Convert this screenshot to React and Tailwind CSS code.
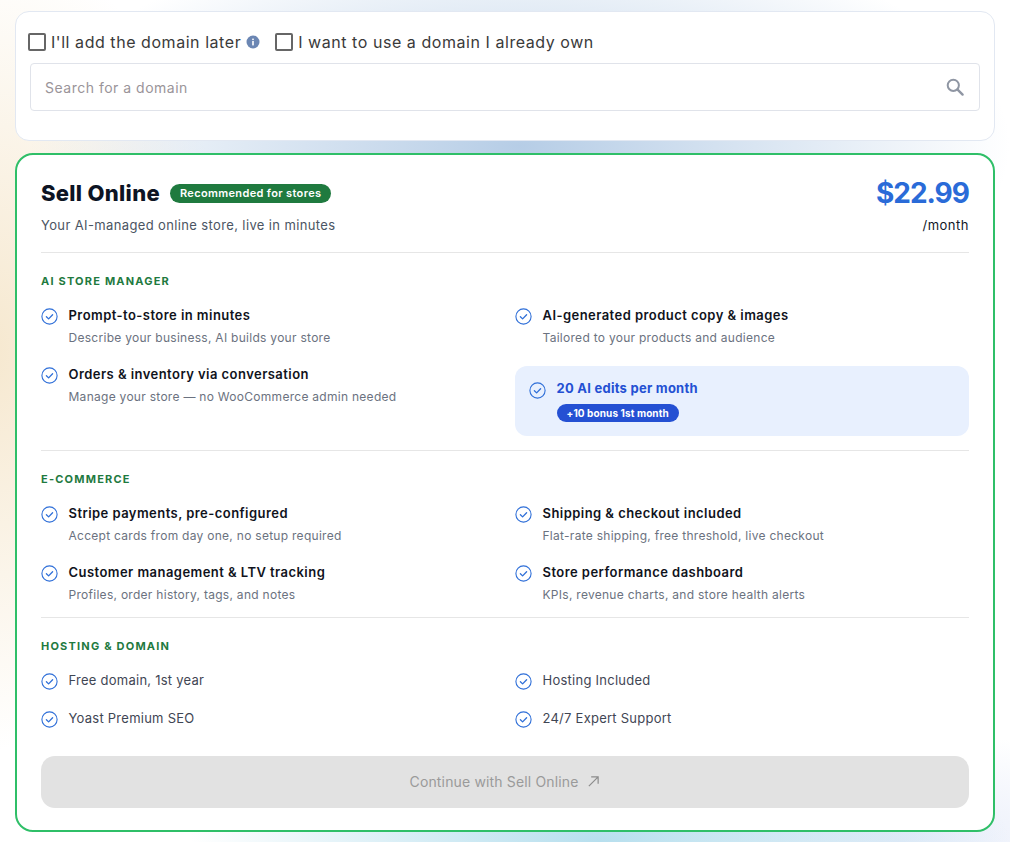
import React from 'react';

const Check = () => (
  <svg className="shrink-0" width="17" height="17" viewBox="0 0 17 17" fill="none">
    <circle cx="8.5" cy="8.5" r="7.6" stroke="#2f6fd8" strokeWidth="1.1" />
    <path d="M5.4 8.8l2.2 2.1 4-4.2" stroke="#2f6fd8" strokeWidth="1.3" strokeLinecap="round" strokeLinejoin="round" />
  </svg>
);

const Feature = ({ title, desc }) => (
  <div className="flex gap-[10.5px]">
    <div className="pt-[3px]"><Check /></div>
    <div>
      <div className="h-[20px] text-[13px] leading-[20px] font-semibold text-[#10131c] tracking-[0.45px]">{title}</div>
      <div className="mt-[3px] h-[20px] text-[12px] leading-[20px] text-[#6b7280] tracking-[0.28px]">{desc}</div>
    </div>
  </div>
);

const Simple = ({ title }) => (
  <div className="flex items-center gap-[10.5px] h-[20px]">
    <Check />
    <span className="text-[13px] text-[#3f4654] tracking-[0.25px]">{title}</span>
  </div>
);

const Heading = ({ children }) => (
  <div className="h-[18px] text-[11px] leading-[18px] font-bold text-[#1f7a3f] tracking-[1.2px] uppercase">{children}</div>
);

const App = () => {
  return (
    <div className="h-[842px] overflow-hidden bg-white bg-[radial-gradient(ellipse_490px_220px_at_520px_146px,#b6cde6_0%,rgba(182,205,230,0)_100%),radial-gradient(ellipse_410px_130px_at_600px_842px,#b7dfee_0%,rgba(183,223,238,0)_100%),radial-gradient(ellipse_300px_110px_at_900px_842px,#e8edfa_0%,rgba(232,237,250,0)_100%),radial-gradient(ellipse_250px_400px_at_-10px_350px,#f6e8cf_0%,rgba(246,232,207,0)_100%)] font-['Inter','Liberation_Sans',sans-serif] pt-[11px] px-[15px]">
      {/* Domain card */}
      <div className="h-[130px] bg-white rounded-[14px] border border-[#e2e8f2] pt-[20px] px-[12px]">
        <div className="flex items-center h-[20px] text-[16px] text-[#3a3a3a] tracking-[0.55px]">
          <label className="flex items-center gap-[5px]">
            <span className="w-[18px] h-[18px] border-2 border-[#666] rounded-[2px] bg-white" />
            I'll add the domain later
          </label>
          <svg className="ml-[5px]" width="14" height="14" viewBox="0 0 14 14">
            <circle cx="7" cy="7" r="6.5" fill="#6b86b3" />
            <rect x="6.2" y="6" width="1.6" height="4.4" fill="#fff" />
            <rect x="6.2" y="3.6" width="1.6" height="1.5" fill="#fff" />
          </svg>
          <label className="flex items-center gap-[5px] ml-[15px]">
            <span className="w-[18px] h-[18px] border-2 border-[#666] rounded-[2px] bg-white" />
            I want to use a domain I already own
          </label>
        </div>
        <div className="relative mt-[11px] ml-[2px] w-[950px]">
          <input
            type="text"
            placeholder="Search for a domain"
            className="w-full h-[48px] rounded-[4px] border border-[#e0e3ea] bg-white pl-[14px] text-[14px] tracking-[0.5px] placeholder:text-[#9a9499] outline-none"
          />
          <svg className="absolute right-[15px] top-[14px]" width="20" height="20" viewBox="0 0 20 20" fill="none">
            <circle cx="8.3" cy="8.3" r="5.6" stroke="#8f96a3" strokeWidth="2" />
            <path d="M12.6 12.6l5 5" stroke="#8f96a3" strokeWidth="2.4" strokeLinecap="round" />
          </svg>
        </div>
      </div>

      {/* Plan card */}
      <div className="mt-[12px] h-[679px] bg-white rounded-[18px] border-2 border-[#2fbf68] px-[24px] pt-[19px]">
        <div className="flex justify-between h-[79px] border-b border-[#e6e6e6]">
          <div>
            <div className="flex items-center gap-[10px] h-[38px]">
              <span className="text-[22px] font-extrabold text-[#0d1424] tracking-[0.3px]">Sell Online</span>
              <span className="h-[19px] px-[10px] rounded-full bg-[#1f7a3f] text-white text-[11px] leading-[19px] font-semibold tracking-[0.35px]">Recommended for stores</span>
            </div>
            <div className="mt-[3px] h-[20px] text-[13px] leading-[20px] text-[#4b5563] tracking-[0.37px]">Your AI-managed online store, live in minutes</div>
          </div>
          <div className="text-right">
            <div className="h-[38px] text-[28px] leading-[38px] font-bold text-[#2a6bd8] tracking-[-1px]">$22.99</div>
            <div className="mt-[3px] h-[20px] text-[13px] leading-[20px] text-[#111827] tracking-[0.5px]">/month</div>
          </div>
        </div>

        <div className="pt-[19px]"><Heading>AI Store Manager</Heading></div>
        <div className="grid grid-cols-2 gap-x-[20px] mt-[15px]">
          <Feature title="Prompt-to-store in minutes" desc="Describe your business, AI builds your store" />
          <Feature title="AI-generated product copy & images" desc="Tailored to your products and audience" />
          <div className="pt-[16px]">
            <Feature title="Orders & inventory via conversation" desc="Manage your store — no WooCommerce admin needed" />
          </div>
          <div className="mt-[18px] h-[70px] rounded-[12px] bg-[#e8f0fe] flex gap-[10.5px] pl-[14px] pt-[12px]">
            <div className="pt-[4px]"><Check /></div>
            <div>
              <div className="h-[20px] text-[13px] leading-[20px] font-bold text-[#2450d3] tracking-[0.25px]">20 AI edits per month</div>
              <div className="mt-[6px] w-fit h-[18px] px-[10px] rounded-full bg-[#2450d3] text-white text-[10px] leading-[18px] font-bold tracking-[0.1px]">+10 bonus 1st month</div>
            </div>
          </div>
        </div>

        <div className="border-t border-[#e6e6e6] mt-[14px] pt-[19px]"><Heading>E-Commerce</Heading></div>
        <div className="grid grid-cols-2 gap-x-[20px] gap-y-[16px] mt-[15px]">
          <Feature title="Stripe payments, pre-configured" desc="Accept cards from day one, no setup required" />
          <Feature title="Shipping & checkout included" desc="Flat-rate shipping, free threshold, live checkout" />
          <Feature title="Customer management & LTV tracking" desc="Profiles, order history, tags, and notes" />
          <Feature title="Store performance dashboard" desc="KPIs, revenue charts, and store health alerts" />
        </div>

        <div className="border-t border-[#e6e6e6] mt-[12px] pt-[19px]"><Heading>Hosting & Domain</Heading></div>
        <div className="grid grid-cols-2 gap-x-[20px] gap-y-[18px] mt-[16px]">
          <Simple title="Free domain, 1st year" />
          <Simple title="Hosting Included" />
          <Simple title="Yoast Premium SEO" />
          <Simple title="24/7 Expert Support" />
        </div>

        <button type="button" disabled className="mt-[27px] w-full h-[52px] pb-[2px] rounded-[14px] bg-[#e2e2e2] text-[#9a9a9a] text-[14px] font-normal tracking-[0.15px] flex items-center justify-center gap-[9px]">
          Continue with Sell Online
          <svg width="13" height="13" viewBox="0 0 14 14" fill="none">
            <path d="M2 12L12 2M4.5 2H12v7.5" stroke="#8c8c8c" strokeWidth="1.3" />
          </svg>
        </button>
      </div>
    </div>
  );
};

export default App;
